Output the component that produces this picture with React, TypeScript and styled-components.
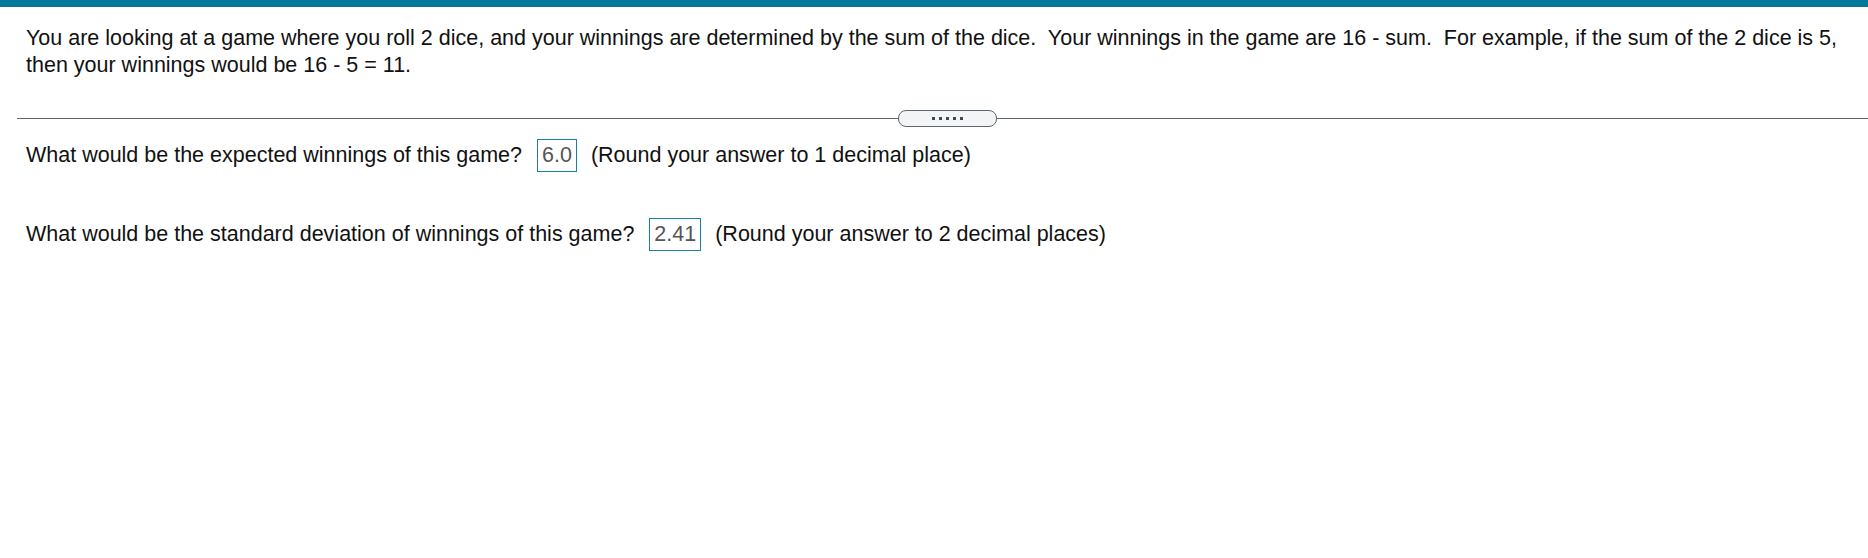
import React from "react";
import styled, { createGlobalStyle } from "styled-components";

const Global = createGlobalStyle`
  html, body { margin: 0; padding: 0; background: #fff; }
  body { font-family: "Liberation Sans", Arial, sans-serif; color: #111; }
`;

const TopBar = styled.div`
  height: 7px;
  background: #04789b;
`;

const Prompt = styled.p`
  margin: 18px 0 0 0;
  padding: 0 26px;
  font-size: 21.5px;
  line-height: 27px;
`;

const DividerRow = styled.div`
  position: relative;
  display: flex;
  align-items: center;
  justify-content: center;
  margin: 31px 0 0 17px;
  padding-left: 9px;
  height: 17px;
`;

const Rule = styled.div`
  position: absolute;
  left: 0;
  right: 0;
  top: 8px;
  height: 1px;
  background: #5b6670;
`;

const Pill = styled.div`
  position: relative;
  width: 97px;
  height: 15px;
  border: 1px solid #5b6670;
  border-radius: 8px;
  background: #f2f4f6;
  display: flex;
  align-items: center;
  justify-content: center;
  gap: 4px;
`;

const Dot = styled.span`
  width: 3px;
  height: 3px;
  background: #3e4752;
`;

const Question = styled.div<{ $top: number }>`
  margin-top: ${(p) => p.$top}px;
  padding-left: 26px;
  font-size: 21.5px;
  line-height: 33px;
  display: flex;
  align-items: center;
`;

const Answer = styled.span`
  display: inline-block;
  box-sizing: border-box;
  height: 33px;
  padding: 0 4px;
  margin: 0 14px 0 15px;
  border: 1px solid #1b7fa0;
  color: #555;
  line-height: 31px;
`;

export default function App() {
  return (
    <>
      <Global />
      <TopBar />
      <Prompt>
        You are looking at a game where you roll 2 dice, and your winnings are determined by the sum of the dice.&nbsp; Your winnings in the game are 16 - sum.&nbsp; For example, if the sum of the 2 dice is 5, then your winnings would be 16 - 5 = 11.
      </Prompt>
      <DividerRow>
        <Rule />
        <Pill>
          {[0, 1, 2, 3, 4].map((i) => (
            <Dot key={i} />
          ))}
        </Pill>
      </DividerRow>
      <Question $top={12}>
        What would be the expected winnings of this game?
        <Answer>6.0</Answer>
        (Round your answer to 1 decimal place)
      </Question>
      <Question $top={46}>
        What would be the standard deviation of winnings of this game?
        <Answer>2.41</Answer>
        (Round your answer to 2 decimal places)
      </Question>
    </>
  );
}
